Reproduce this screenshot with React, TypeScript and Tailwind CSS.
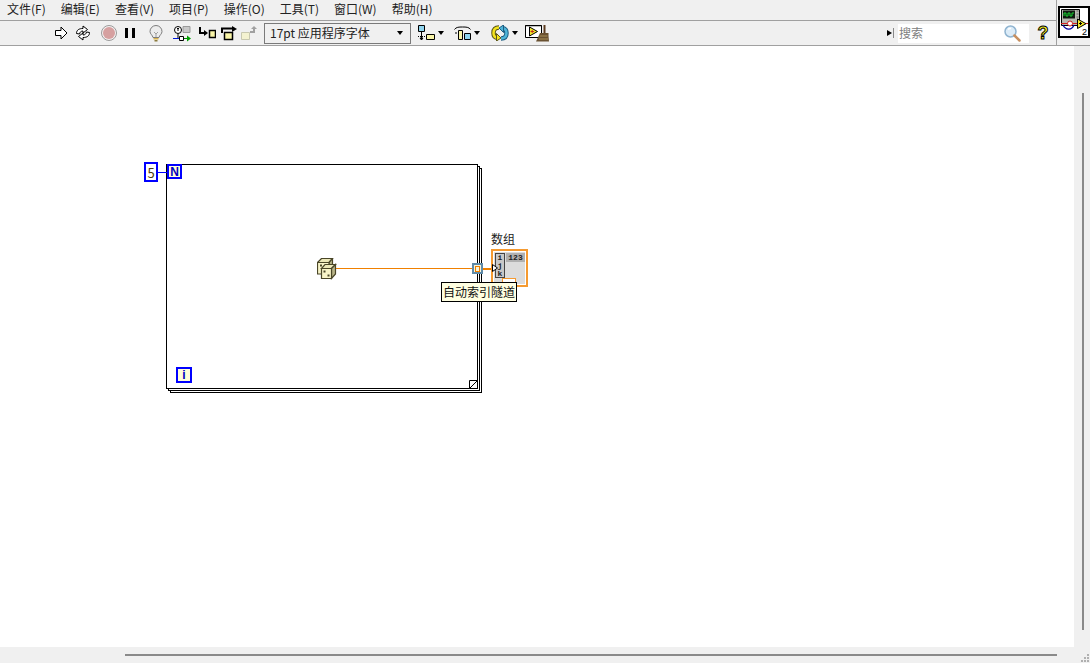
const menus = ['文件(F)', '编辑(E)', '查看(V)', '项目(P)', '操作(O)', '工具(T)', '窗口(W)', '帮助(H)'];

function Caret() {
  return <div className="h-0 w-0 border-x-[3.5px] border-t-[4px] border-x-transparent border-t-black" />;
}

function RunIcon() {
  return (
    <svg width="13" height="14" viewBox="0 0 13 14" className="ml-[55px]">
      <path d="M.5 4.500h5.500V1l6 6-6 6V9.500H.5z" fill="#fff" stroke="#000" />
    </svg>
  );
}

function RunContinuousIcon() {
  return (
    <svg width="16" height="16" viewBox="0 0 16 16" className="ml-[7px]">
      <path d="M1.500 8.500C1.500 5 4 3.500 8 3.500V1l4.500 3.500L8 8V6C6 6 5 7 4.500 9z" fill="#fff" stroke="#000" />
      <path d="M14.500 7.500C14.500 11 12 12.500 8 12.500V15l-4.500-3.500L8 8v2c2 0 3-1 3.500-3z" fill="#fff" stroke="#000" />
    </svg>
  );
}

function AbortIcon() {
  return (
    <svg width="16" height="16" viewBox="0 0 16 16" className="ml-[10px]">
      <circle cx="8" cy="8" r="7.500" fill="#f4f0f0" stroke="#9a9a9a" />
      <circle cx="8" cy="8" r="6" fill="#d6a0a0" />
    </svg>
  );
}

function PauseIcon() {
  return (
    <div className="ml-[8px] flex h-[10px] w-[10px] justify-between">
      <div className="w-[3px] bg-black" />
      <div className="w-[3px] bg-black" />
    </div>
  );
}

function BulbIcon() {
  return (
    <svg width="14" height="17" viewBox="0 0 14 17" className="ml-[14px]">
      <path d="M7 .5a6 6 0 0 0-6 6c0 2.500 2.500 3.500 3 6h6c.5-2.500 3-3.500 3-6a6 6 0 0 0-6-6z" fill="#ececec" stroke="#7c7c7c" />
      <path d="M5 7l2 2 2-2M7 9v3" fill="none" stroke="#a0a0a0" />
      <path d="M4.500 13h5v1.500h-5z" fill="#d8b24c" />
      <path d="M5.500 15h3v1.500h-3z" fill="#8a7a3c" />
    </svg>
  );
}

function RetainIcon() {
  return (
    <svg width="19" height="17" viewBox="0 0 19 17" className="ml-[10px]">
      <circle cx="5" cy="5" r="3.500" fill="#fff" stroke="#000" />
      <path d="M5 3v3M4 3.500h2" stroke="#000" fill="none" />
      <path d="M5 8.500V14" stroke="#000" />
      <path d="M10 1.500h7v6h-7z" fill="#c8c8c8" stroke="#999" />
      <path d="M0 13.500h6" stroke="#0018d8" />
      <path d="M6.500 11.500h4v4h-4z" fill="#fff" stroke="#000" />
      <path d="M11 13.500h4" stroke="#009000" />
      <path d="M14 10.500l4 3-4 3z" fill="#00a000" />
    </svg>
  );
}

function StepIntoIcon() {
  return (
    <svg width="17" height="12" viewBox="0 0 17 12" className="ml-[7px]">
      <path d="M1 0v6h5" fill="none" stroke="#000" strokeWidth="2" />
      <path d="M5 3l4 3-4 3z" fill="#000" />
      <path d="M10.500 3.500h6v7h-6z" fill="#f8f4a8" stroke="#000" strokeWidth="1.500" />
    </svg>
  );
}

function StepOverIcon() {
  return (
    <svg width="17" height="15" viewBox="0 0 17 15" className="ml-[5px]">
      <path d="M1 7V2.500h10" fill="none" stroke="#000" strokeWidth="2" />
      <path d="M11 0l5 3-5 3z" fill="#000" />
      <path d="M3.500 6.500h8v7h-8z" fill="#f8f4a8" stroke="#000" strokeWidth="1.500" />
    </svg>
  );
}

function StepOutIcon() {
  return (
    <svg width="17" height="14" viewBox="0 0 17 14" className="ml-[3px]">
      <path d="M.5 6.500h8v7h-8z" fill="#f4f2d0" stroke="#c8c8b0" />
      <path d="M9 6h4V2" fill="none" stroke="#a0a0a0" strokeWidth="2" />
      <path d="M10 3l3-3 3 3z" fill="#a0a0a0" />
    </svg>
  );
}

function AlignIcon() {
  return (
    <svg width="17" height="17" viewBox="0 0 17 17">
      <path d="M.5 .5h6v6h-6z" fill="#8fd4ee" stroke="#000" />
      <path d="M0 11.500h17" stroke="#000" strokeDasharray="1 1" />
      <path d="M3.500 7v8M2 13l1.500 2L5 13z" stroke="#000" fill="#000" />
      <path d="M8.500 9.500h8v5h-8z" fill="#f8f4a8" stroke="#000" />
    </svg>
  );
}

function DistributeIcon() {
  return (
    <svg width="17" height="15" viewBox="0 0 17 15">
      <path d="M.5 3.500C2 1 5 1 8.500 1s6.500 0 8 2.500" fill="none" stroke="#000" />
      <path d="M1 7h2" stroke="#000" />
      <path d="M4.500 4.500h4v9h-4z" fill="#f8f4a8" stroke="#000" />
      <path d="M10.500 7.500h6v6h-6z" fill="#8fd4ee" stroke="#000" />
    </svg>
  );
}

function ReorderIcon() {
  return (
    <svg width="18" height="16" viewBox="0 0 18 16">
      <path d="M8 2.500C4 2.500 2.500 5 2.500 8c0 2.500 1.500 4.500 4 5" fill="none" stroke="#5a5618" strokeWidth="4.500" />
      <path d="M8 2.500C4 2.500 2.500 5 2.500 8c0 2.500 1.500 4.500 4 5" fill="none" stroke="#f4e41e" strokeWidth="2.500" />
      <path d="M5.500 8.500l4.500 4.500-4.500 3z" fill="#f4e41e" stroke="#5a5618" />
      <path d="M10 13.500c4 0 5.500-2.500 5.500-5.500 0-2.500-1.500-4.500-4-5" fill="none" stroke="#1c5c80" strokeWidth="4.500" />
      <path d="M10 13.500c4 0 5.500-2.500 5.500-5.500 0-2.500-1.500-4.500-4-5" fill="none" stroke="#4eb4d8" strokeWidth="2.500" />
      <path d="M12.500 7.500L8 3l4.500-3z" fill="#4eb4d8" stroke="#1c5c80" />
    </svg>
  );
}

function CleanupIcon() {
  return (
    <svg width="24" height="17" viewBox="0 0 24 17" className="ml-[7px]">
      <path d="M.5 .5h16v12H.5z" fill="#fff" stroke="#000" />
      <path d="M.5 .5h16" stroke="#000" strokeWidth="1.500" />
      <path d="M4.500 2v9l8-4.500z" fill="#f4e82a" stroke="#000" />
      <path d="M5.500 6.500h3.500M7.200 5v3" stroke="#c02020" strokeWidth=".9" />
      <path d="M19.500 0v8" stroke="#5c3c20" strokeWidth="2" />
      <path d="M15 8h8.500v3L24 16.500H11z" fill="#6a5232" />
      <path d="M14.500 11h8M14 14h9" stroke="#a89058" />
    </svg>
  );
}

function SearchGlass() {
  return (
    <svg width="17" height="17" viewBox="0 0 17 17">
      <circle cx="6.500" cy="6.500" r="5.500" fill="#dcecf8" stroke="#90b4d0" strokeWidth="1.500" />
      <path d="M4 4.500c1-1 2-1.200 3-1" fill="none" stroke="#fff" strokeWidth="1.500" />
      <path d="M10.500 10.500l5 5" stroke="#c89060" strokeWidth="2.500" strokeLinecap="round" />
    </svg>
  );
}

function HelpIcon() {
  return (
    <svg width="14" height="22" viewBox="0 0 14 22" className="ml-[7px]">
      <text x="7" y="17" textAnchor="middle" fontSize="18" fontWeight="700" fontFamily="Liberation Sans" fill="#f8f020" stroke="#000" strokeWidth="1">?</text>
    </svg>
  );
}

function ViIcon() {
  return (
    <div className="mt-[6px] ml-px h-[32px] w-[32px] border-2 border-black bg-white">
      <svg width="28" height="28" viewBox="0 0 28 28">
        <path d="M1.500 1.500h18v16h-18z" fill="#b8b8b0" stroke="#000" />
        <path d="M3 2.500h12v8H3z" fill="#101810" />
        <path d="M4 8V5h2v3h2V5h2v3h2V5h2" fill="none" stroke="#18d030" />
        <path d="M16.500 3h2M16.500 6h2M16.500 9h2" stroke="#666" />
        <path d="M1 15.500h16" stroke="#d02020" />
        <path d="M3 17c3 6 9 5 11 0" fill="none" stroke="#0000a0" strokeWidth="1.200" />
        <circle cx="10" cy="15.500" r="2.500" fill="#fff" stroke="#d02020" />
        <path d="M17.500 11v9.500l8.500-4.800z" fill="#f4e82a" stroke="#000" />
        <path d="M26 15.500h2" stroke="#d02020" />
        <path d="M19 15.500h3M20.500 14v3" stroke="#000" />
        <text x="22" y="27" fontSize="9" fontFamily="Liberation Sans" fill="#000">2</text>
      </svg>
    </div>
  );
}

function Dice() {
  return (
    <svg width="20" height="22" viewBox="0 0 20 22">
      <path d="M.5 4.500l4-4h11L12 4.500z" fill="#ece8b8" stroke="#4a4628" strokeWidth="1.200" />
      <path d="M15.500 .5V8L12 12V4.500z" fill="#b8b488" stroke="#4a4628" strokeWidth="1.200" />
      <path d="M.5 4.500H12V16H.5z" fill="#f8f4c8" stroke="#4a4628" strokeWidth="1.200" />
      <path d="M4.500 10.500l3.500-4h10.500l-4 4z" fill="#ece8b8" stroke="#4a4628" strokeWidth="1.200" />
      <path d="M14.500 10.500l4-4V16l-4 4.500z" fill="#b8b488" stroke="#4a4628" strokeWidth="1.200" />
      <path d="M4.500 10.500h10v10h-10z" fill="#f8f4c8" stroke="#4a4628" strokeWidth="1.200" />
      <path d="M6.500 12.500h2v2h-2zM10.500 16.500h2v2h-2zM3 6.500h2v2H3z" fill="#4a4628" />
    </svg>
  );
}

function Diagram() {
  return (
    <div className="relative min-w-0 flex-1 bg-white">
      {/* loop frames, back to front */}
      <div className="absolute top-[122px] left-[170px] h-[225px] w-[312px] border border-black bg-white" />
      <div className="absolute top-[120px] left-[168px] h-[225px] w-[312px] border border-black bg-white" />
      <div className="absolute top-[118px] left-[166px] h-[225px] w-[312px] border border-black bg-white" />
      <svg width="9" height="9" viewBox="0 0 9 9" className="absolute top-[334px] left-[469px]">
        <path d="M.5 8.500V.5h8z" fill="#fff" stroke="#000" />
      </svg>

      {/* count */}
      <div className="absolute top-[116px] left-[144px] flex h-[20px] w-[14px] items-center justify-center border-2 border-[#0000ff] bg-white text-[13px] leading-none text-[#4a3a10]">
        5
      </div>
      <div className="absolute top-[126px] left-[158px] h-px w-[9px] bg-[#0000ff]" />
      <div className="absolute top-[118px] left-[167px] flex h-[15px] w-[15px] items-center justify-center border-2 border-[#0000ff] bg-[#ffffd8] font-['Liberation_Sans',sans-serif] text-[12px] leading-none font-bold text-[#0000c0]">
        N
      </div>
      <div className="absolute top-[321px] left-[176px] flex h-[16px] w-[16px] items-center justify-center border-2 border-[#0000ff] bg-[#ffffd8] font-['Liberation_Sans',sans-serif] text-[12px] leading-none font-bold text-[#0000c0]">
        i
      </div>

      {/* random number and wire */}
      <div className="absolute top-[212px] left-[317px]">
        <Dice />
      </div>
      <div className="absolute top-[222px] left-[336px] h-px w-[137px] bg-[#f08000]" />

      {/* tunnel */}
      <div className="absolute top-[217px] left-[472px] flex h-[11px] w-[11px] items-center justify-center border-2 border-[#5f8aa8] bg-[#f8f4d8]">
        <div className="h-[6px] w-[5px] border border-[#f08000]" />
      </div>
      <div className="absolute top-[222px] left-[483px] h-[2px] w-[10px] bg-[#f08000]" />

      {/* array indicator */}
      <div className="absolute top-[184px] left-[491px] text-[12px] leading-[18px] text-[#222]">数组</div>
      <div className="absolute top-[203px] left-[491px] h-[38px] w-[37px] border-2 border-[#f59a30] bg-white p-px">
        <div className="flex h-full gap-px bg-[#dcdcdc] pt-px pl-px">
          <div className="flex h-[25px] w-[10px] flex-col border border-[#444] bg-[#c8c8c8] font-['Liberation_Mono',monospace] text-[8px] leading-[8px] font-bold">
            <span className="text-center">i</span>
            <span className="text-center">j</span>
            <span className="text-center">k</span>
          </div>
          <div className="flex h-[9px] w-[19px] items-center justify-center bg-[#b0b0b0] font-['Liberation_Mono',monospace] text-[8px] leading-none font-bold">
            123
          </div>
        </div>
      </div>
      <div className="absolute top-[232px] left-[502px] h-[6px] w-[14px] border border-[#f59a30] bg-white" />
      <svg width="6" height="8" viewBox="0 0 6 8" className="absolute top-[218px] left-[492px]">
        <path d="M.5 .5l5 3.500-5 3.500z" fill="#fff" stroke="#000" />
      </svg>

      {/* tooltip */}
      <div className="absolute top-[236px] left-[441px] flex h-[20px] w-[76px] items-center justify-center border border-black bg-[#ffffe1] pb-px text-[12px] leading-none text-[#111]">
        自动索引隧道
      </div>
    </div>
  );
}

export default function App() {
  return (
    <div className="flex h-[663px] w-[1090px] flex-col overflow-hidden bg-[#f0f0f0] font-['Noto_Sans_CJK_SC','Noto_Sans',sans-serif] text-[12px] text-[#222]">
      <div className="flex h-[46px] border-b border-[#a0a0a0]">
        <div className="flex min-w-0 flex-1 flex-col border-r border-[#a0a0a0]">
          <div className="flex h-[21px] items-center gap-[15px] border-b border-[#a0a0a0] pb-[3px] pl-[7px] leading-none">
            {menus.map((m) => (
              <span key={m}>{m}</span>
            ))}
          </div>
          <div className="flex h-[24px] items-center">
            <RunIcon />
            <RunContinuousIcon />
            <AbortIcon />
            <PauseIcon />
            <BulbIcon />
            <RetainIcon />
            <StepIntoIcon />
            <StepOverIcon />
            <StepOutIcon />
            <div className="ml-[6px] flex h-[21px] w-[147px] items-center justify-between border border-[#7a7a7a] pr-[7px] pl-[5px] leading-none">
              <span>17pt 应用程序字体</span>
              <Caret />
            </div>
            <div className="ml-[7px] flex w-[26px] items-center justify-between">
              <AlignIcon />
              <Caret />
            </div>
            <div className="ml-[10px] flex w-[26px] items-center justify-between">
              <DistributeIcon />
              <Caret />
            </div>
            <div className="ml-[11px] flex w-[27px] items-center justify-between">
              <ReorderIcon />
              <Caret />
            </div>
            <CleanupIcon />
            <div className="ml-auto flex items-center pr-[6px]">
              <div className="h-0 w-0 border-y-[3px] border-l-[5px] border-y-transparent border-l-black" />
              <div className="mr-[4px] ml-px h-[10px] w-px bg-[#888]" />
              <div className="flex h-[19px] w-[131px] items-center justify-between bg-white pr-[8px] pl-px leading-none text-[#808080]">
                <span>搜索</span>
                <SearchGlass />
              </div>
              <HelpIcon />
            </div>
          </div>
        </div>
        <ViIcon />
      </div>
      <div className="flex min-h-0 flex-1">
        <Diagram />
        <div className="flex w-[16px] justify-center pt-[47px] pb-[17px] pl-[1px]">
          <div className="w-[2px] bg-[#8a8a8a]" />
        </div>
      </div>
      <div className="relative flex h-[16px] shrink-0 items-center pr-[33px] pl-[125px]">
        <div className="h-[2px] flex-1 bg-[#8a8a8a]" />
        <svg width="10" height="10" viewBox="0 0 10 10" className="absolute right-0 bottom-0">
          <path d="M7 1h2v2H7zM4 4h2v2H4zM7 4h2v2H7zM1 7h2v2H1zM4 7h2v2H4zM7 7h2v2H7z" fill="#b0b0b0" />
        </svg>
      </div>
    </div>
  );
}
